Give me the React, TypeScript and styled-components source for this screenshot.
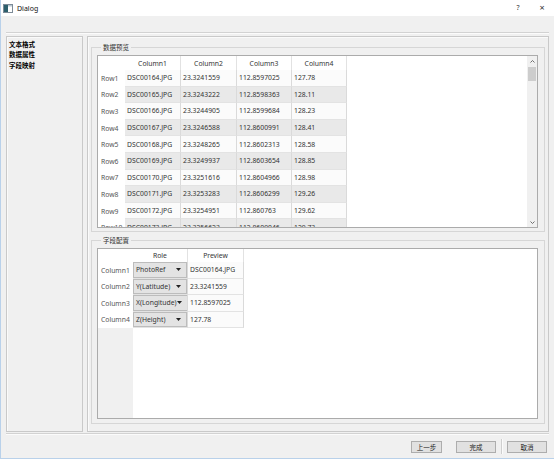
import React from 'react';
import styled, { createGlobalStyle } from 'styled-components';

const Global = createGlobalStyle`
  html, body { margin: 0; padding: 0; background: #f0f0f0; }
  * { box-sizing: border-box; }
  body { font-family: "Noto Sans", "Noto Sans CJK SC", sans-serif; }
`;

const FONT = `"Noto Sans", "Noto Sans CJK SC", sans-serif`;
const CJK = `"Noto Sans CJK SC", "Noto Sans", sans-serif`;

const Window = styled.div`
  width: 554px;
  height: 459px;
  background: #f0f0f0;
  display: flex;
  flex-direction: column;
  border-left: 1px solid #b9d1ea;
  border-bottom: 1px solid #b9d1ea;
  overflow: hidden;
  font-family: ${FONT};
  color: #222;
`;

const TitleBar = styled.div`
  height: 16px;
  flex-shrink: 0;
  background: #fff;
  display: flex;
  align-items: center;
  padding-left: 2px;
`;

const TitleText = styled.span`
  font-size: 7px;
  margin-left: 4px;
  color: #111;
`;

const TitleSpacer = styled.div`
  flex: 1;
`;

const TitleButton = styled.span`
  width: 24px;
  text-align: center;
  font-size: ${(p: { $size: number }) => p.$size}px;
  color: #333;
  line-height: 16px;
`;

const Body = styled.div`
  flex: 1;
  display: flex;
  flex-direction: column;
  padding: 0 5px;
`;

const HRule = styled.div<{ $top: number }>`
  margin-top: ${(p) => p.$top}px;
  height: 2px;
  flex-shrink: 0;
  border-top: 1px solid #d2d2d2;
  border-bottom: 1px solid #fbfbfb;
`;

const Main = styled.div`
  margin-top: 2px;
  height: 396px;
  flex-shrink: 0;
  display: flex;
  gap: 4px;
`;

const NavPanel = styled.div`
  width: 77px;
  border: 1px solid #c9c9c9;
  box-shadow: inset 1px 1px 0 #fafafa;
  padding: 2px 2px;
  display: flex;
  flex-direction: column;
`;

const NavItem = styled.div`
  font-family: ${CJK};
  font-size: 6.5px;
  line-height: 10.3px;
  font-weight: 600;
  color: #000;
`;

const ContentPanel = styled.div`
  flex: 1;
  border: 1px solid #c9c9c9;
  box-shadow: inset 1px 1px 0 #fafafa;
  padding: 5px 3px 7px 3px;
  display: flex;
  flex-direction: column;
  gap: 3px;
`;

const GroupBox = styled.fieldset<{ $grow?: boolean }>`
  margin: 0;
  min-width: 0;
  border: 1px solid #d6d6d6;
  padding: 3px 6px 3px 5px;
  display: flex;
  flex-direction: column;
  flex: ${(p) => (p.$grow ? '1' : '0 0 190px')};
`;

const GroupTitle = styled.legend`
  font-family: ${CJK};
  font-size: 6.5px;
  line-height: 10px;
  padding: 0 2px;
  margin-left: 4px;
  color: #333;
`;

const TableFrame = styled.div<{ $h: number }>`
  height: ${(p) => p.$h}px;
  flex-shrink: 0;
  border: 1px solid #ababab;
  background: #fff;
  display: flex;
  overflow: hidden;
`;

const GridArea = styled.div`
  flex: 1;
  overflow: hidden;
  display: flex;
  flex-direction: column;
`;

const TRow = styled.div<{ $h: number }>`
  display: flex;
  height: ${(p) => p.$h}px;
  flex-shrink: 0;
`;

const CellBase = styled.div<{ $w: number }>`
  width: ${(p) => p.$w}px;
  flex-shrink: 0;
  display: flex;
  align-items: center;
  font-size: 6.8px;
  white-space: nowrap;
  overflow: hidden;
`;

const Corner = styled(CellBase)`
  background: #fff;
`;

const ColHead = styled(CellBase)`
  justify-content: center;
  color: #333;
  background: #fff;
  border-right: 1px solid #e2e2e2;
`;

const RowHead = styled(CellBase)`
  padding-left: 3px;
  color: #555;
  background: #fff;
`;

const Cell = styled(CellBase)<{ $alt?: boolean }>`
  padding-left: 2px;
  color: #333;
  background: ${(p) => (p.$alt ? '#e9e9e9' : '#fbfbfb')};
  border-right: 1px solid #dadada;
  border-bottom: 1px solid #e3e3e3;
`;

const ScrollBar = styled.div`
  width: 10px;
  flex-shrink: 0;
  background: #f0f0f0;
  display: flex;
  flex-direction: column;
`;

const ScrollArrow = styled.div`
  height: 10px;
  display: flex;
  align-items: center;
  justify-content: center;
  flex-shrink: 0;
`;

const ScrollTrack = styled.div`
  flex: 1;
  padding: 1px 1px 0 1px;
`;

const Thumb = styled.div`
  height: 14px;
  background: #cdcdcd;
`;

const ConfigFrame = styled(TableFrame)`
  flex-direction: column;
`;

const RoleCell = styled(CellBase)`
  padding: 0;
  align-items: stretch;
  border-right: 1px solid #dadada;
  border-bottom: 1px solid #e3e3e3;
`;

const Combo = styled.div`
  flex: 1;
  display: flex;
  align-items: center;
  justify-content: space-between;
  background: #e3e3e3;
  border: 1px solid #bcbcbc;
  padding: 0 5px 0 2px;
  color: #333;
`;

const Filler = styled.div`
  flex: 1;
  display: flex;
`;

const FillerHead = styled.div`
  width: 35px;
  background: #f0f0f0;
`;

const ButtonRow = styled.div`
  margin-top: 4px;
  height: 15px;
  display: flex;
  justify-content: flex-end;
  align-items: center;
  padding-right: 2px;
`;

const Button = styled.button<{ $w: number; $ml: number }>`
  width: ${(p) => p.$w}px;
  height: 12px;
  margin-left: ${(p) => p.$ml}px;
  padding: 0;
  background: #e1e1e1;
  border: 1px solid #adadad;
  font-family: ${CJK};
  font-size: 6.5px;
  line-height: 10px;
  color: #222;
`;

const VSep = styled.div`
  width: 2px;
  height: 15px;
  margin-left: 5px;
  border-left: 1px solid #cfcfcf;
  border-right: 1px solid #fbfbfb;
`;

const Chevron = ({ up }: { up?: boolean }) => (
  <svg width="5" height="3" viewBox="0 0 5 3">
    <polyline
      points={up ? '0.5,2.5 2.5,0.5 4.5,2.5' : '0.5,0.5 2.5,2.5 4.5,0.5'}
      fill="none"
      stroke="#606060"
      strokeWidth="0.9"
    />
  </svg>
);

const DropArrow = () => (
  <svg width="5" height="3" viewBox="0 0 5 3">
    <polygon points="0,0 5,0 2.5,3" fill="#222" />
  </svg>
);

const AppIcon = () => (
  <svg width="10" height="9" viewBox="0 0 10 9">
    <rect x="0.5" y="0.5" width="9" height="8" fill="#fff" stroke="#7d8b97" />
    <rect x="1" y="1" width="4" height="7" fill="#2c5f6c" />
    <rect x="5" y="1" width="4" height="1.5" fill="#b9c7d2" />
  </svg>
);

const data = [
  ['DSC00164.JPG', '23.3241559', '112.8597025', '127.78'],
  ['DSC00165.JPG', '23.3243222', '112.8598363', '128.11'],
  ['DSC00166.JPG', '23.3244905', '112.8599684', '128.23'],
  ['DSC00167.JPG', '23.3246588', '112.8600991', '128.41'],
  ['DSC00168.JPG', '23.3248265', '112.8602313', '128.58'],
  ['DSC00169.JPG', '23.3249937', '112.8603654', '128.85'],
  ['DSC00170.JPG', '23.3251616', '112.8604966', '128.98'],
  ['DSC00171.JPG', '23.3253283', '112.8606299', '129.26'],
  ['DSC00172.JPG', '23.3254951', '112.860763', '129.62'],
  ['DSC00173.JPG', '23.3256623', '112.8609046', '129.73'],
];

const colW = [56, 56, 55, 55];

const config = [
  ['Column1', 'PhotoRef', 'DSC00164.JPG'],
  ['Column2', 'Y(Latitude)', '23.3241559'],
  ['Column3', 'X(Longitude)', '112.8597025'],
  ['Column4', 'Z(Height)', '127.78'],
];

export default function App() {
  return (
    <>
      <Global />
      <Window>
        <TitleBar>
          <AppIcon />
          <TitleText>Dialog</TitleText>
          <TitleSpacer />
          <TitleButton $size={7}>?</TitleButton>
          <TitleButton $size={9}>×</TitleButton>
        </TitleBar>
        <Body>
          <HRule $top={16} />
          <Main>
            <NavPanel>
              <NavItem>文本格式</NavItem>
              <NavItem>数据属性</NavItem>
              <NavItem>字段映射</NavItem>
            </NavPanel>
            <ContentPanel>
              <GroupBox>
                <GroupTitle>数据预览</GroupTitle>
                <TableFrame $h={173}>
                  <GridArea>
                    <TRow $h={14}>
                      <Corner $w={27} />
                      {colW.map((w, i) => (
                        <ColHead key={i} $w={w}>
                          Column{i + 1}
                        </ColHead>
                      ))}
                    </TRow>
                    {data.map((r, i) => (
                      <TRow key={i} $h={16.6}>
                        <RowHead $w={27}>Row{i + 1}</RowHead>
                        {r.map((v, j) => (
                          <Cell key={j} $w={colW[j]} $alt={i % 2 === 1}>
                            {v}
                          </Cell>
                        ))}
                      </TRow>
                    ))}
                  </GridArea>
                  <ScrollBar>
                    <ScrollArrow>
                      <Chevron up />
                    </ScrollArrow>
                    <ScrollTrack>
                      <Thumb />
                    </ScrollTrack>
                    <ScrollArrow>
                      <Chevron />
                    </ScrollArrow>
                  </ScrollBar>
                </TableFrame>
              </GroupBox>
              <GroupBox $grow>
                <GroupTitle>字段配置</GroupTitle>
                <ConfigFrame $h={171}>
                  <TRow $h={13}>
                    <Corner $w={35} />
                    <ColHead $w={55}>Role</ColHead>
                    <ColHead $w={56}>Preview</ColHead>
                  </TRow>
                  {config.map((r, i) => (
                    <TRow key={i} $h={16.5}>
                      <RowHead $w={35}>{r[0]}</RowHead>
                      <RoleCell $w={55}>
                        <Combo>
                          <span>{r[1]}</span>
                          <DropArrow />
                        </Combo>
                      </RoleCell>
                      <Cell $w={56}>{r[2]}</Cell>
                    </TRow>
                  ))}
                  <Filler>
                    <FillerHead />
                  </Filler>
                </ConfigFrame>
              </GroupBox>
            </ContentPanel>
          </Main>
          <HRule $top={1} />
          <ButtonRow>
            <Button $w={31} $ml={0}>上一步</Button>
            <Button $w={40} $ml={14}>完成</Button>
            <VSep />
            <Button $w={40} $ml={4}>取消</Button>
          </ButtonRow>
        </Body>
      </Window>
    </>
  );
}
